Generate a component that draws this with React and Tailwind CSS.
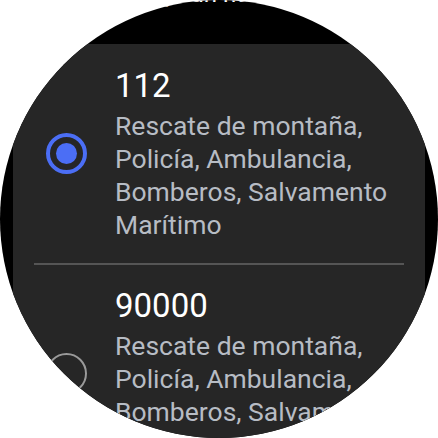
const items = [
  { num: '112', desc: 'Rescate de montaña, Policía, Ambulancia, Bomberos, Salvamento Marítimo', checked: true },
  { num: '90000', desc: 'Rescate de montaña, Policía, Ambulancia, Bomberos, Salvamento Marítimo', checked: false },
];

function Radio({ checked }) {
  if (checked) {
    return (
      <div className="flex h-[41px] w-[41px] shrink-0 items-center justify-center rounded-full border-[4px] border-[#4b6ef5]">
        <div className="h-[21px] w-[21px] rounded-full bg-[#4b6ef5]" />
      </div>
    );
  }
  return <div className="h-[41px] w-[41px] shrink-0 rounded-full border-[2.5px] border-[#9a9a9a]" />;
}

export default function App() {
  return (
    <div className="h-[438px] w-[438px] bg-white" style={{ fontFamily: 'Roboto, "Noto Sans", sans-serif' }}>
      <div className="flex h-[438px] w-[438px] flex-col overflow-hidden rounded-full bg-black">
        <div className="flex h-[44px] shrink-0 justify-center overflow-hidden">
          <div className="mt-[-21px] text-[24px] leading-[30px] text-white">Elige un número</div>
        </div>
        <div className="mx-[13px] flex-1 bg-[#262626] px-[21px]">
          {items.map((it, i) => (
            <div key={i}>
              {i > 0 && <div className="h-[2px] bg-[#555555]" />}
              <div className={`flex items-center gap-[28px] pl-[12px] ${i === 0 ? 'pb-[22px] pt-[22px]' : 'pt-[21px]'}`}>
                <Radio checked={it.checked} />
                <div className="flex-1">
                  <div className="text-[33px] leading-[40px] text-white">{it.num}</div>
                  <div className="mt-[3px] text-[26.5px] leading-[33px] text-[#b7bcc4]">{it.desc}</div>
                </div>
              </div>
            </div>
          ))}
        </div>
      </div>
    </div>
  );
}
